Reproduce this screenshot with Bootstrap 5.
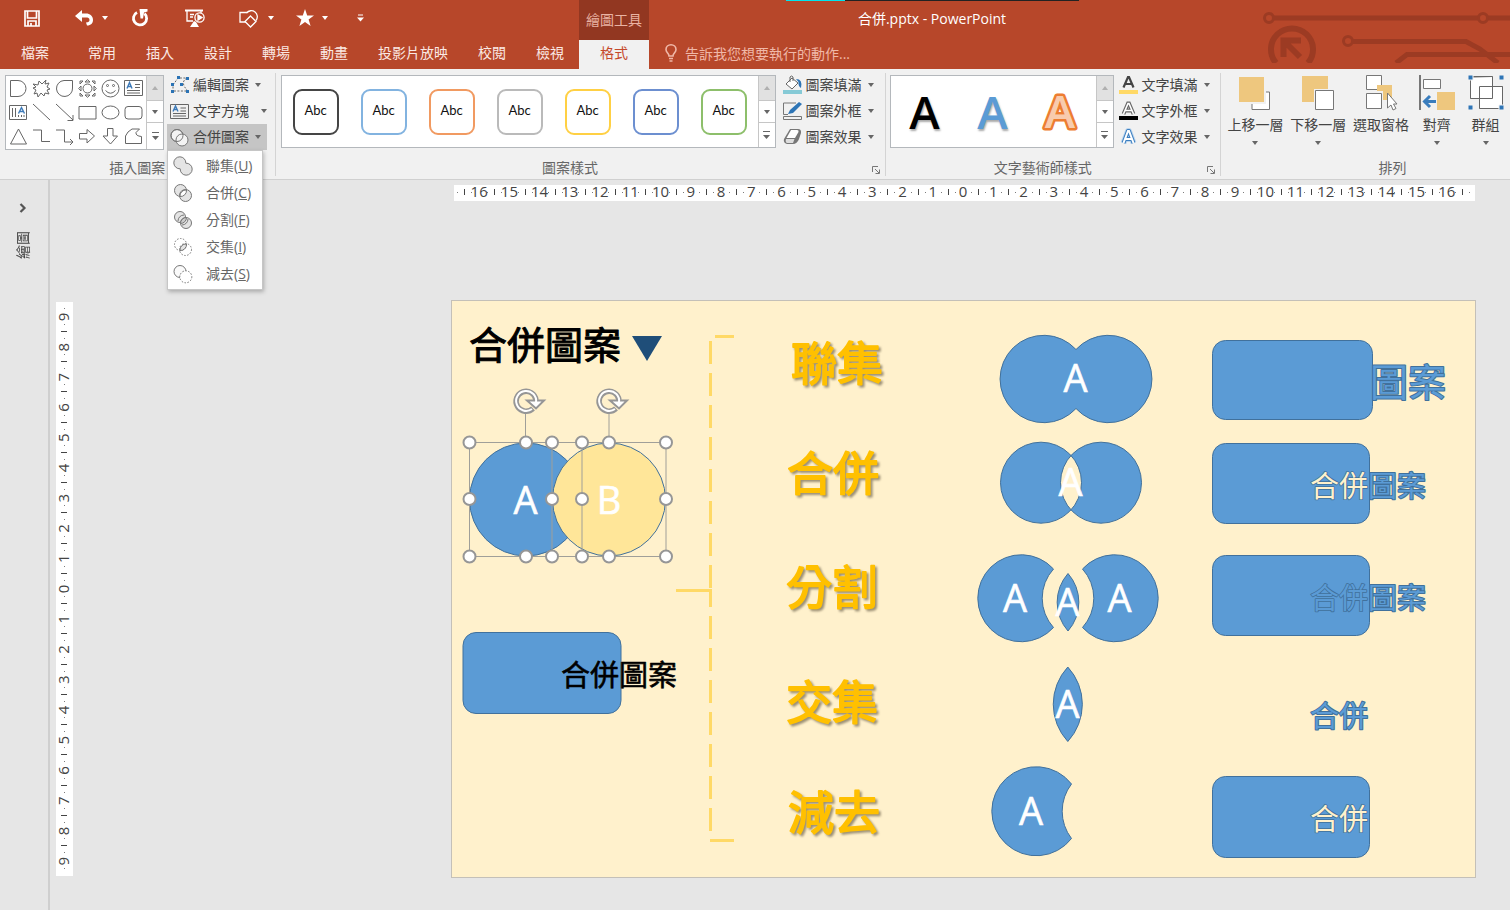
<!DOCTYPE html>
<html lang="zh-Hant">
<head>
<meta charset="utf-8">
<meta name="viewport" content="width=device-width, initial-scale=1">
<title>合併.pptx - PowerPoint</title>
<link rel="stylesheet" href="https://cdn.jsdelivr.net/npm/bootstrap@5.3.0/dist/css/bootstrap.min.css">
<style>
:root{--brand:#b7472a;--brand-dark:#923721;--ribbon:#f1f1f1;--ink:#444;--line:#d4d4d4}
body{font-family:"Open Sans","Noto Sans CJK TC",sans-serif;font-size:14px;line-height:20px;color:var(--ink);background:#e6e6e6}
button{border:0;background:none;padding:0;color:inherit;font:inherit}
svg{display:block;flex:none}
.titlebar{background:var(--brand);color:#fff}
.title-row{height:40px}
.tab-row{height:29px}
.quick{width:579px;height:36px}
.quick button{height:24px}
.context-cap{width:70px;background:var(--brand-dark);color:#e9b3a3}
.doc-title{margin-right:295px;height:38px;font-size:14px}
.tabs a{color:#fbe9e4;text-decoration:none;padding:3px 15px 0;height:29px}
.tabs .file-tab{width:70px;margin-right:3px;padding:3px 0 0;text-align:center}
.tabs .tab-on{background:var(--ribbon);color:#c5492b;width:70px;padding:3px 0 0;text-align:center}
.tell{margin-left:16px;height:26px}
.tell input{background:none;border:0;outline:0;color:#f0b8a8;width:260px;height:24px;padding:0}
.tell input::placeholder{color:#f0b8a8;opacity:1}
.circuit{top:0;right:0}
.screen-strip{top:0;left:786px;width:293px;height:1px;background:linear-gradient(90deg,#00e5ef 59px,#222 59px)}
.ribbon{background:var(--ribbon);border-bottom:1px solid #d0d0d0;height:111px}
.rgroup{margin:4px 0 3px;padding-top:2px;border-right:1px solid var(--line)}
.rgroup:last-child{border-right:0}
.rlabel{line-height:16px;color:#666}
.rlabel.with-launch{padding-right:20px}
.launch{right:5px;bottom:2px}
.gallery{border:1px solid #b4b8bc;background:#fff}
.scroller{width:17px;border-left:1px solid #c6c6c6}
.scroller button{border-bottom:1px solid #c6c6c6;height:22px;display:flex;align-items:center;justify-content:center}
.scroller button:first-child{height:25px;background:#e1e1e1}
.scroller button:last-child{border-bottom:0;flex:1}
.shape-grid{display:grid;grid-template-columns:repeat(6,23px);grid-auto-rows:24px;width:141px;padding:0 0 0 1px}
.shape-grid button{display:flex;align-items:center;justify-content:center}
.shape-grid svg{fill:none;stroke:#666;stroke-width:1}
.cmd{height:26px;gap:3px;padding-left:3px;white-space:nowrap}
.cmd .caret{margin-left:3px}
.cmd-wide .caret{margin-left:9px}
.cmd.pressed{background:#c5c5c5;width:100px}
.caret{width:0;height:0;border:3px solid transparent;border-top:4px solid #666;border-bottom:0;display:inline-block;flex:none}
.caret-w{border-top-color:#fff}
.merge-menu{min-width:96px;width:96px;top:26px;left:0;border:1px solid #c6c6c6;border-radius:0;padding:1px 0 2px;box-shadow:1px 2px 4px rgba(0,0,0,.25);font-size:14px;z-index:10}
.merge-menu .dropdown-item{height:27px;padding:0 0 0 5px;display:flex;align-items:center;gap:13px;color:#666}
.merge-menu svg{fill:#e4e4e4;stroke:#777}
.style-tile{width:68px}
.style-tile span{width:46px;height:46px;border:2px solid;border-radius:9px;display:flex;align-items:center;justify-content:center;font:13px/16px Lato,"Open Sans",sans-serif;padding-bottom:4px}
.style-tile b{font-weight:400;color:#111}
.art-tile{width:68px;font-size:46px;line-height:68px;font-weight:600;padding-bottom:2px}
.arrange button{width:63px;height:76px}
.arrange .slim{width:49px}
.arrange svg{margin:0 auto}
.arrange .tag-line{line-height:20px;margin-top:4px;white-space:nowrap}
.arrange .caret{margin-top:6px}
.arrange-label{padding-left:54px}
.side-pane{width:50px;border-right:2px solid #cfcfcf;flex:none}
.side-pane button{margin-left:16px}
.side-text{writing-mode:vertical-rl;text-orientation:sideways;transform:rotate(180deg);line-height:14px;margin-top:18px}
.v-ruler{margin:122px 0 0 6px;background:#fff;width:17px;height:574px;flex:none}
.stage{margin:5px 34px 32px 378px;min-width:0}
.h-ruler{background:#fff;margin:0 1px 99px 3px}
.h-ruler svg,.slide svg{width:100%;height:auto}
.ruler-marks{font-size:15px;fill:#444;overflow:visible}
.slide{background:#fff1cc;border:1px solid #c4c0b8}
.fill-blue{fill:#5b9bd5;stroke:#41719c}
.letter{font-size:38px;fill:#fff;stroke:#fff;stroke-width:.6;text-anchor:middle}
.hand{font-family:"Noto Sans CJK TC",sans-serif;stroke-linejoin:round;stroke-linecap:round}
.big{font-size:38px}
.mid{font-size:29px}
.black-ink{fill:#000;stroke:#000;stroke-width:1}
.mid.black-ink{stroke-width:.6}
.op-name{font-size:46px;fill:#ffc000;stroke:#ffc000;stroke-width:1.8;text-anchor:middle;filter:drop-shadow(2px 2px 1px rgba(90,80,60,.6))}
.bluetext{fill:#5b9bd5;stroke:#41719c;stroke-width:2;paint-order:stroke}
.cream{fill:#fff1cc;stroke:#41719c;stroke-width:1.6;paint-order:stroke}
.etched{fill:#5b9bd5;stroke:#41719c;stroke-width:1.6;paint-order:stroke}
</style>
</head>
<body class="d-flex flex-column min-vh-100">

<header class="titlebar position-relative">
  <svg class="circuit position-absolute" width="250" height="63" viewBox="1260 0 250 63" fill="none" stroke="#9c3b23" stroke-width="5" aria-hidden="true">
    <circle cx="1269" cy="18" r="4.500" stroke-width="3"/><path d="M1274 18H1478M1488 18H1510"/><circle cx="1483" cy="18" r="4.500" stroke-width="3"/>
    <circle cx="1348" cy="41" r="4.500" stroke-width="3"/><path d="M1353 41.500H1466L1480 49 1498 63M1396 63L1407 54.500H1510"/>
    <path d="M1276 63A21 21 0 1 1 1308 63" stroke-width="6"/><path d="M1283.500 57V40.500H1301M1284 41L1300 57" stroke-width="6"/>
  </svg>
  <div class="screen-strip position-absolute"></div>
  <div class="title-row d-flex">
    <div class="quick d-flex align-items-center">
      <button aria-label="儲存" style="margin-left:24px"><svg width="16" height="17" viewBox="0 0 16 17"><path d="M1 1H15V16H1ZM3.500 1V8H12.500V1M4 16V11H12V16M7 16V13" fill="none" stroke="#fff" stroke-width="1.700"/></svg></button>
      <button class="d-flex align-items-center" aria-label="復原" style="margin-left:35px"><svg width="19" height="16" viewBox="0 0 19 16"><path d="M0 6L7 0V3.500H11C15 3.500 18 6 18 10 18 13 16 15.500 12 15.500L11 12.500C13.500 12.500 14.500 11.500 14.500 10 14.500 8 13 7.500 11 7.500H7V12Z" fill="#fff"/></svg><i class="caret caret-w ms-2 me-1"></i></button>
      <button aria-label="重複" style="margin-left:19px"><svg width="18" height="18" viewBox="0 0 18 18"><path d="M6 3.500A6.600 6.600 0 1 0 13.500 4.500" fill="none" stroke="#fff" stroke-width="2.800"/><path d="M8.500 0H16.500V2.500L13 3.500 12 9.500H9.500Z" fill="#fff"/></svg></button>
      <button aria-label="從首張投影片" style="margin-left:36px"><svg width="20" height="19" viewBox="0 0 20 19" fill="none" stroke="#fff" stroke-width="1.300"><path d="M0 1.500H18" stroke-width="2"/><path d="M2 2V12H8M5 5.500H9M5 8H8M16 2V4"/><circle cx="14.500" cy="8.500" r="4.600"/><path d="M13 6L17 8.500 13 11Z" fill="#fff"/><path d="M9 12L5 18H14L11 13Z" fill="#fff" stroke="none"/></svg></button>
      <button class="d-flex align-items-center" aria-label="圖案" style="margin-left:34px"><svg width="21" height="20" viewBox="0 0 21 20" fill="none" stroke="#fff" stroke-width="1.300"><path d="M7 14H1V4.500H8"/><path d="M7.500 5A6 6 0 1 1 17 12.500"/><path d="M11.500 8L17 13.500 11.500 19 6 13.500Z"/></svg><i class="caret caret-w ms-2"></i></button>
      <button class="d-flex align-items-center" aria-label="最愛" style="margin-left:22px"><svg width="18" height="18" viewBox="0 0 18 18"><path d="M9 0L11.200 6.400H18L12.600 10.400 14.600 17 9 13 3.400 17 5.400 10.400 0 6.400H6.800Z" fill="#fff"/></svg><i class="caret caret-w ms-2"></i></button>
      <button aria-label="自訂快速存取工具列" style="margin-left:29px"><svg width="7" height="8" viewBox="0 0 7 8"><path d="M1 1H6" stroke="#fff"/><path d="M0 3.500H7L3.500 7.500Z" fill="#fff"/></svg></button>
    </div>
    <div class="context-cap d-flex align-items-center justify-content-center">繪圖工具</div>
    <div class="doc-title flex-grow-1 d-flex align-items-center justify-content-center">合併.pptx - PowerPoint</div>
  </div>
  <div class="tab-row d-flex">
    <nav class="tabs d-flex" aria-label="功能區">
      <a href="#" class="file-tab">檔案</a><a href="#">常用</a><a href="#">插入</a><a href="#">設計</a><a href="#">轉場</a><a href="#">動畫</a><a href="#">投影片放映</a><a href="#">校閱</a><a href="#">檢視</a><a href="#" class="tab-on">格式</a>
    </nav>
    <label class="tell d-flex align-items-center gap-2"><svg width="12" height="18" viewBox="0 0 12 18" fill="none" stroke="#f0b8a8" stroke-width="1.600"><path d="M4 12C4 9.500 1 8.500 1 5.500A5 4.700 0 0 1 11 5.500C11 8.500 8 9.500 8 12ZM4 14.500H8M4.500 17H7.500"/></svg><input type="text" aria-label="告訴我" placeholder="告訴我您想要執行的動作..."></label>
  </div>
</header>

<section class="ribbon d-flex" aria-label="格式">
  <div class="rgroup d-flex flex-column" style="width:276px">
    <div class="d-flex">
      <div class="gallery d-flex" style="margin-left:5px;width:159px;height:75px">
        <div class="shape-grid">
          <button aria-label="延遲"><svg width="19" height="19"><path d="M1.500 1.500H9A8 8 0 0 1 9 17.500H1.500Z"/></svg></button>
          <button aria-label="爆炸"><svg width="19" height="19"><path d="M1 5L6 6 7 2 10 5 14 1 13 5 17 4 15 8 18 10 15 11 17 15 13 14 12 17 9 14 6 18 5 14 2 15 4 11 1 9 4 8Z"/></svg></button>
          <button aria-label="淚滴"><svg width="19" height="19"><path d="M17.500 1.500V9A8 8 0 1 1 9 1.500Z"/></svg></button>
          <button aria-label="太陽"><svg width="19" height="19"><circle cx="9.500" cy="9.500" r="4.500"/><path d="M7 3L9.500 .7 12 3ZM7 16L9.500 18.300 12 16ZM3 7L.7 9.500 3 12ZM16 7L18.300 9.500 16 12ZM2 2H5L2 5ZM17 2V5L14 2ZM2 17V14L5 17ZM17 17H14L17 14Z"/></svg></button>
          <button aria-label="笑臉"><svg width="19" height="19"><circle cx="9.500" cy="9.500" r="8.500"/><circle cx="6.500" cy="6.500" r="1"/><circle cx="12.500" cy="6.500" r="1"/><path d="M4.500 11.500Q9.500 17 14.500 11.500"/></svg></button>
          <button aria-label="文字方塊"><svg width="19" height="19"><path d="M.5 1.500H18.500V16.500H.5ZM11 5.500H16M11 8.500H16M3 11.500H16M3 14H16"/><path d="M3 9.500L5.500 3.500 8 9.500M4 7.500H7" stroke="#3d7ab8" stroke-width="1.400"/></svg></button>
          <button aria-label="垂直文字方塊"><svg width="19" height="19"><path d="M.5 2.500H17.500V16.500H.5ZM3.500 5V14M6.500 5V14M9.500 12V14M12.500 12V14M15 12V14"/><path d="M9.500 10.500L12.500 4.500 15.500 10.500M10.500 8.500H14.500" stroke="#3d7ab8" stroke-width="1.400"/></svg></button>
          <button aria-label="線條"><svg width="19" height="19"><path d="M1 1L18 17"/></svg></button>
          <button aria-label="箭號"><svg width="19" height="19"><path d="M1 1L18 17M18 12V17.500H12.500"/></svg></button>
          <button aria-label="矩形"><svg width="19" height="19"><path d="M1 3.500H18V16H1Z"/></svg></button>
          <button aria-label="橢圓"><svg width="19" height="19"><ellipse cx="9.500" cy="9.500" rx="8.500" ry="6.500"/></svg></button>
          <button aria-label="圓角矩形"><svg width="19" height="19"><rect x="1" y="3.500" width="17" height="12.500" rx="3"/></svg></button>
          <button aria-label="三角形"><svg width="19" height="19"><path d="M9.500 2L17.500 17H1.500Z"/></svg></button>
          <button aria-label="肘形接點"><svg width="19" height="19"><path d="M1 3H9.500V14.500H18"/></svg></button>
          <button aria-label="肘形箭號"><svg width="19" height="19"><path d="M1 3H9.500V15H18M15 12L18 15 15 18"/></svg></button>
          <button aria-label="向右箭號"><svg width="19" height="19"><path d="M1.500 6.500H9V2.500L16.500 9 9 16V12H1.500Z"/></svg></button>
          <button aria-label="向下箭號"><svg width="19" height="19"><path d="M6.500 1.500H12V9H16.500L9.500 17 2 9H6.500Z"/></svg></button>
          <button aria-label="手繪多邊形"><svg width="19" height="19"><path d="M4 5L8 2H15.500L12 5.500Q11.500 9 17.500 9.500V16.500H1.500V9Z"/></svg></button>
        </div>
        <div class="scroller d-flex flex-column"><button aria-label="上"><i class="caret" style="transform:rotate(180deg);opacity:.4"></i></button><button aria-label="下"><i class="caret"></i></button><button aria-label="更多"><svg width="7" height="8"><path d="M0 .5H7" stroke="#666"/><path d="M0 4H7L3.500 8Z" fill="#666"/></svg></button></div>
      </div>
      <div class="d-flex flex-column align-items-start" style="margin:-3px 0 0 3px">
        <button class="cmd d-flex align-items-center"><svg width="20" height="18" viewBox="0 0 20 18"><path d="M3 16V9L8 2H17C12 5 12 9 18 15H3" fill="none" stroke="#666" stroke-dasharray="2 1.500"/><path d="M7 0H10V3H7ZM16 1H19V4H16ZM1 7H4V10H1ZM10 7H13V10H10ZM1 14H4V17H1ZM16 14H19V17H16Z" fill="#2b73b5"/></svg>編輯圖案<i class="caret"></i></button>
        <button class="cmd cmd-wide d-flex align-items-center"><svg width="20" height="17" viewBox="0 0 20 17"><path d="M.5 1.500H18.500V15.500H.5ZM10.500 5H16M10.500 8H16M3 10.500H16M3 13H16" fill="none" stroke="#666"/><path d="M3 8.500L5.500 3 8 8.500M4 6.500H7" fill="none" stroke="#3d7ab8" stroke-width="1.400"/></svg>文字方塊<i class="caret"></i></button>
        <div class="dropdown">
          <button class="cmd pressed d-flex align-items-center" aria-expanded="true"><svg width="20" height="19" viewBox="0 0 20 19" fill="#f3f3f3" stroke="#777"><circle cx="7" cy="7.500" r="6"/><circle cx="12" cy="12" r="6"/><circle cx="7" cy="7.500" r="6" fill="none"/></svg>合併圖案<i class="caret"></i></button>
          <div class="dropdown-menu merge-menu show position-absolute">
            <a class="dropdown-item" href="#"><svg width="20" height="20"><path d="M12.800 7.200A6 6 0 1 0 7.200 12.800A6 6 0 1 0 12.800 7.200Z"/></svg><span>聯集(<u>U</u>)</span></a>
            <a class="dropdown-item" href="#"><svg width="20" height="20"><circle cx="7.500" cy="7.500" r="6"/><circle cx="12.500" cy="12.500" r="6"/><path d="M13.500 7A6 6 0 0 1 7 13.500A6 6 0 0 1 13.500 7Z" fill="#fff"/></svg><span>合併(<u>C</u>)</span></a>
            <a class="dropdown-item" href="#"><svg width="20" height="20"><circle cx="7" cy="7" r="5.500"/><circle cx="13" cy="13" r="5.500"/><path d="M13.500 7.500A6 6 0 0 1 7.500 13.500A6 6 0 0 1 13.500 7.500Z" fill="#ccc"/><path d="M5 11A6 6 0 0 1 11 5M9 15A6 6 0 0 0 15 9" fill="none"/></svg><span>分割(<u>F</u>)</span></a>
            <a class="dropdown-item" href="#"><svg width="20" height="20"><circle cx="7.500" cy="7.500" r="6" fill="none" stroke-dasharray="1.500 1.500"/><circle cx="12.500" cy="12.500" r="6" fill="none" stroke-dasharray="1.500 1.500"/><path d="M13.500 7A6 6 0 0 1 7 13.500A6 6 0 0 1 13.500 7Z"/></svg><span>交集(<u>I</u>)</span></a>
            <a class="dropdown-item" href="#"><svg width="20" height="20"><path d="M13 7.500A6 6 0 1 0 7 13.500A6 6 0 0 1 13 7.500Z" fill="#fafafa"/><circle cx="12.800" cy="12.800" r="6" fill="#fff" stroke-dasharray="1.500 1.500"/></svg><span>減去(<u>S</u>)</span></a>
          </div>
        </div>
      </div>
    </div>
    <div class="rlabel mt-auto text-center">插入圖案</div>
  </div>

  <div class="rgroup d-flex flex-column flex-grow-1 position-relative">
    <div class="d-flex">
      <div class="gallery d-flex flex-grow-1" style="margin-left:5px;height:73px">
        <div class="d-flex flex-grow-1">
          <button class="style-tile d-flex align-items-center justify-content-center"><span style="border-color:#454545"><b>Abc</b></span></button>
          <button class="style-tile d-flex align-items-center justify-content-center"><span style="border-color:#82b3e0"><b>Abc</b></span></button>
          <button class="style-tile d-flex align-items-center justify-content-center"><span style="border-color:#f19a61"><b>Abc</b></span></button>
          <button class="style-tile d-flex align-items-center justify-content-center"><span style="border-color:#bababa"><b>Abc</b></span></button>
          <button class="style-tile d-flex align-items-center justify-content-center"><span style="border-color:#ffd044"><b>Abc</b></span></button>
          <button class="style-tile d-flex align-items-center justify-content-center"><span style="border-color:#6c8fd0"><b>Abc</b></span></button>
          <button class="style-tile d-flex align-items-center justify-content-center"><span style="border-color:#8dbf6b"><b>Abc</b></span></button>
        </div>
        <div class="scroller d-flex flex-column"><button aria-label="上"><i class="caret" style="transform:rotate(180deg);opacity:.4"></i></button><button aria-label="下"><i class="caret"></i></button><button aria-label="更多"><svg width="7" height="8"><path d="M0 .5H7" stroke="#666"/><path d="M0 4H7L3.500 8Z" fill="#666"/></svg></button></div>
      </div>
      <div class="d-flex flex-column" style="margin:-3px 11px 0 4px">
        <button class="cmd d-flex align-items-center"><svg width="20" height="20" viewBox="0 0 20 20"><path d="M3 9L9 3 15 8 9 14Z" fill="#fff" stroke="#666"/><path d="M7 7V2Q8.500 0 10 2V6" fill="none" stroke="#666"/><path d="M13 4Q20 4 18 13Q15 11 15.500 7Z" fill="#2e75b6"/><path d="M0 15H19V19H0Z" fill="#86cad6"/></svg>圖案填滿<i class="caret"></i></button>
        <button class="cmd d-flex align-items-center"><svg width="20" height="20" viewBox="0 0 20 20"><path d="M13 2H.5V13.500H5M.5 15.500H18.500V18.500H.5Z" fill="none" stroke="#777"/><path d="M5 13L7 9 16 1 19 3 10 12Z" fill="#2e75b6"/></svg>圖案外框<i class="caret"></i></button>
        <button class="cmd d-flex align-items-center"><svg width="20" height="20" viewBox="0 0 20 20"><path d="M7 2H15Q18.500 2 18 6L16 12Q14 17 10 17H4Q0 16 1 12Z" fill="#777"/><path d="M8 3H14Q16 3 15.500 5L12 11H3.500Z" fill="#fff"/><path d="M3 12H11.500L10 16H4Q2 15 3 12Z" fill="#ddd"/></svg>圖案效果<i class="caret"></i></button>
      </div>
    </div>
    <div class="rlabel with-launch mt-auto text-center">圖案樣式</div>
    <button class="launch position-absolute" aria-label="設定圖案格式"><svg width="8" height="8" fill="none" stroke="#777"><path d="M.5 6V.5H6M3 3L7 7M7.500 3.500V7.500H3.500"/></svg></button>
  </div>

  <div class="rgroup d-flex flex-column position-relative" style="width:336px">
    <div class="d-flex">
      <div class="gallery d-flex" style="margin-left:4px;width:224px;height:73px">
        <div class="d-flex flex-grow-1">
          <button class="art-tile" style="color:#000;text-shadow:1px 2px 2px #aaa">A</button>
          <button class="art-tile" style="color:#5b9bd5;text-shadow:1px 2px 2px #aaa">A</button>
          <button class="art-tile" aria-label="A"><svg width="68" height="68"><text x="33" y="51" text-anchor="middle" fill="#f8cbad" stroke="#ed7d31" stroke-width="5" paint-order="stroke" stroke-linejoin="round">A</text></svg></button>
        </div>
        <div class="scroller d-flex flex-column"><button aria-label="上"><i class="caret" style="transform:rotate(180deg);opacity:.4"></i></button><button aria-label="下"><i class="caret"></i></button><button aria-label="更多"><svg width="7" height="8"><path d="M0 .5H7" stroke="#666"/><path d="M0 4H7L3.500 8Z" fill="#666"/></svg></button></div>
      </div>
      <div class="d-flex flex-column" style="margin:-3px 0 0 2px">
        <button class="cmd d-flex align-items-center"><svg width="20" height="20" viewBox="0 0 20 20"><path d="M4.500 12.500L9 2H10L14.500 12.500M6 9H13" fill="none" stroke="#444" stroke-width="2.200"/><path d="M0 15H19V19H0Z" fill="#ffd966"/></svg>文字填滿<i class="caret"></i></button>
        <button class="cmd d-flex align-items-center"><svg width="20" height="20" viewBox="0 0 20 20"><path d="M4.500 13L9 2.500H10L14.500 13M6 9.500H13" fill="none" stroke="#666" stroke-width="3.800"/><path d="M4.500 13L9 2.500H10L14.500 13M6 9.500H13" fill="none" stroke="#fff" stroke-width="1.600"/><path d="M0 15H19V19H0Z" fill="#000"/></svg>文字外框<i class="caret"></i></button>
        <button class="cmd d-flex align-items-center"><svg width="20" height="20" viewBox="0 0 20 20"><path d="M4.500 16L9 4H10L14.500 16M6 12H13" fill="none" stroke="#bcd6ee" stroke-width="6" stroke-linejoin="round"/><path d="M4.500 16L9 4H10L14.500 16M6 12H13" fill="none" stroke="#3d7fc0" stroke-width="4" stroke-linejoin="round"/><path d="M4.500 16L9 4H10L14.500 16M6 12H13" fill="none" stroke="#fff" stroke-width="2"/></svg>文字效果<i class="caret"></i></button>
      </div>
    </div>
    <div class="rlabel with-launch mt-auto text-center">文字藝術師樣式</div>
    <button class="launch position-absolute" aria-label="設定文字效果格式"><svg width="8" height="8" fill="none" stroke="#777"><path d="M.5 6V.5H6M3 3L7 7M7.500 3.500V7.500H3.500"/></svg></button>
  </div>

  <div class="rgroup d-flex flex-column" style="width:289px">
    <div class="arrange d-flex" style="margin-left:3px">
      <button class="d-flex flex-column align-items-center"><svg width="34" height="36"><path d="M14 17H31.500V34.500H14Z" fill="#fff" stroke="#777"/><path d="M0 1H27V28H0Z" fill="#eec77e" stroke="#f1f1f1" stroke-width="2"/></svg><span class="tag-line">上移一層</span><i class="caret"></i></button>
      <button class="d-flex flex-column align-items-center"><svg width="34" height="36"><path d="M1 1H27V27H1Z" fill="#eec77e"/><path d="M13 14H34V36H13Z" fill="#f1f1f1"/><path d="M14.500 15.500H32.500V34.500H14.500Z" fill="#fff" stroke="#777"/></svg><span class="tag-line">下移一層</span><i class="caret"></i></button>
      <button class="d-flex flex-column align-items-center"><svg width="34" height="36"><path d="M2.500 .5H17.500V14.500H2.500ZM2.500 18.500H17.500V33.500H2.500Z" fill="#fff" stroke="#777"/><path d="M13 10H28V25H19V16H13Z" fill="#eec77e"/><path d="M23.500 18V33L27 30 29 35 32 33.500 29.500 29H33Z" fill="#fff" stroke="#777"/></svg><span class="tag-line">選取窗格</span></button>
      <button class="slim d-flex flex-column align-items-center"><svg width="36" height="36"><path d="M1 0V35" stroke="#777" stroke-width="2"/><path d="M4.500 4.500H21.500V13.500H4.500Z" fill="#fff" stroke="#777"/><path d="M18 17H36V35H18Z" fill="#eec77e"/><path d="M5 26.500H17M11 21L5.500 26.500 11 32" fill="none" stroke="#3a7dbd" stroke-width="3"/></svg><span class="tag-line">對齊</span><i class="caret"></i></button>
      <button class="slim d-flex flex-column align-items-center"><svg width="36" height="36"><path d="M2.500 2.500V23.500H11.500V33.500H34.500V11.500H24.500V1.500Z" fill="#fff" stroke="#aaa"/><path d="M2.500 1.500H24.500V23.500H2.500ZM11.500 11.500H34.500V33.500H11.500Z" fill="none" stroke="#666"/><path d="M0 0H5V5H0ZM31 0H36V5H31ZM0 30H5V35H0ZM31 30H36V35H31Z" fill="#2e75b6" stroke="#f1f1f1"/></svg><span class="tag-line">群組</span><i class="caret"></i></button>
    </div>
    <div class="rlabel arrange-label mt-auto text-center">排列</div>
  </div>
</section>

<main class="d-flex flex-grow-1">
  <aside class="side-pane">
    <button class="d-flex flex-column align-items-center" style="padding-top:23px" aria-label="展開繪圖窗格"><svg width="14" height="10"><path d="M4.500 1L8.500 5 4.500 9" fill="none" stroke="#555" stroke-width="2.200"/></svg><span class="side-text">繪圖</span></button>
  </aside>
  <div class="v-ruler"><svg id="vRuler" class="ruler-marks" width="17" height="574" viewBox="0 0 17 574"></svg></div>
  <div class="stage flex-grow-1">
    <div class="h-ruler"><svg id="hRuler" class="ruler-marks" viewBox="0 0 1021 16"></svg></div>
    <div class="slide">
      <svg viewBox="452 301 1023 576" role="img" aria-label="合併圖案投影片">
        <text class="hand big black-ink" x="469" y="359">合併圖案</text>
        <path d="M632 336H662L647 361Z" fill="#1f4e79"/>
        <g stroke="#ffd966" stroke-width="3" fill="none">
          <path d="M710.500 341V589" stroke-dasharray="23 9"/><path d="M676 590.500H712M710.500 589V607"/><path d="M710.500 616V832" stroke-dasharray="23 9"/><path d="M715 336.500H734M710 840.500H734"/>
        </g>
        <circle class="fill-blue" cx="526" cy="499.500" r="56.500"/>
        <circle cx="609" cy="499.500" r="56.500" fill="#ffe699" stroke="#41719c"/>
        <text class="letter" x="525.500" y="513.500">A</text><text class="letter" x="609" y="513.500">B</text>
        <path d="M469.500 442.500H582V556.500H469.500ZM552 442.500H666V556.500H552ZM525.500 412V442M609 412V442" fill="none" stroke="#a09f99"/>
        <g id="handles" fill="#fff" stroke="#969696" stroke-width="2"></g>
        <g id="turn" fill="none">
          <path d="M533 408.500A10 10 0 1 1 536 400" stroke="#969696" stroke-width="5.500"/><path d="M527 400.500H544L536 408.500Z" fill="#fff" stroke="#969696" stroke-width="2"/><path d="M532 409A10 10 0 1 1 536 402.500" stroke="#fff" stroke-width="2"/>
        </g>
        <use href="#turn" x="83"/>
        <rect class="fill-blue" x="463" y="632.500" width="158" height="81" rx="13"/>
        <text class="hand mid black-ink" x="561" y="686">合併圖案</text>

        <g class="hand">
          <text class="op-name" x="837" y="380">聯集</text><text class="op-name" x="833" y="490">合併</text><text class="op-name" x="832" y="604">分割</text><text class="op-name" x="832" y="719">交集</text><text class="op-name" x="834" y="829">減去</text>
        </g>

        <g class="fill-blue">
          <path d="M1076 349.500A43.700 43.700 0 1 0 1076 408.500A43.700 43.700 0 1 0 1076 349.500Z"/>
          <path fill-rule="evenodd" d="M1000.500 482.700a40.500 40.500 0 1 0 81 0a40.500 40.500 0 1 0 -81 0ZM1060.500 482.700a40.500 40.500 0 1 0 81 0a40.500 40.500 0 1 0 -81 0Z"/>
          <path d="M1053.500 569A43.500 43.500 0 1 0 1053.500 627.500A43.500 43.500 0 0 1 1053.500 569Z"/>
          <path d="M1082.500 569A43.500 43.500 0 1 1 1082.500 627.500A43.500 43.500 0 0 0 1082.500 569Z"/>
          <path d="M1068 573.500A43.500 43.500 0 0 1 1068 631A43.500 43.500 0 0 1 1068 573.500Z"/>
          <path d="M1067.800 667A55 55 0 0 1 1067.800 741.500A55 55 0 0 1 1067.800 667Z"/>
          <path d="M1071.500 784A44.500 44.500 0 1 0 1071.500 838.500A44.500 44.500 0 0 1 1071.500 784Z"/>
          <rect x="1212.500" y="340.500" width="160" height="79" rx="13"/>
          <rect x="1212.500" y="443.500" width="157" height="80" rx="13"/>
          <rect x="1212.500" y="555.500" width="157" height="80" rx="13"/>
          <rect x="1212.500" y="776.500" width="157" height="81" rx="13"/>
        </g>
        <text class="letter" x="1075.500" y="392">A</text><text class="letter" x="1070.500" y="496">A</text><text class="letter" x="1015" y="612">A</text><text class="letter" x="1067.500" y="616">A</text><text class="letter" x="1119.500" y="612">A</text><text class="letter" x="1067.500" y="718">A</text><text class="letter" x="1031" y="825">A</text>

        <g class="hand">
          <text class="big bluetext" x="1370" y="396">圖案</text>
          <text class="mid" x="1310" y="497"><tspan class="cream">合併</tspan><tspan class="bluetext">圖案</tspan></text>
          <text class="mid" x="1310" y="609"><tspan class="etched">合併</tspan><tspan class="bluetext">圖案</tspan></text>
          <text class="mid bluetext" x="1310" y="727">合併</text>
          <text class="mid cream" x="1310" y="830">合併</text>
        </g>
      </svg>
    </div>
  </div>
</main>

<script>
const NS = 'http://www.w3.org/2000/svg';
function add(parent, tag, attrs, text) {
  const el = document.createElementNS(NS, tag);
  for (const k in attrs) el.setAttribute(k, attrs[k]);
  if (text !== undefined) el.textContent = text;
  parent.appendChild(el);
}
// One number per centimetre, a tick at each half and a dot at each quarter
const step = 30.24;
function ruler(host, count, origin, length, vertical) {
  const g = document.createElementNS(NS, 'g');
  if (vertical) g.setAttribute('transform', 'translate(0 ' + length + ') rotate(-90)');
  host.appendChild(g);
  const base = vertical ? 13 : 12;
  for (let i = -count - 1; i <= count; i++) {
    const x = origin + i * step;
    if (i >= -count) add(g, 'text', {x: x, y: base, 'text-anchor': 'middle'}, Math.abs(i));
    const t = x + step / 2;
    if (t > 0 && t < length) add(g, 'rect', {x: Math.round(t), y: base - 8, width: 1, height: 6});
    [t - 7, t + 7].forEach(d => { if (d > 0 && d < length) add(g, 'rect', {x: Math.round(d), y: base - 5, width: 1, height: 1, opacity: .7}); });
  }
}
ruler(document.getElementById('hRuler'), 16, 509, 1021, false);
ruler(document.getElementById('vRuler'), 9, 287, 574, true);
const handles = document.getElementById('handles');
[469.5, 526, 552, 582, 609, 666].forEach(x => [442.5, 499, 556.5].forEach(y => {
  if (y !== 499 || (x !== 526 && x !== 609)) add(handles, 'circle', {cx: x, cy: y, r: 6});
}));
</script>
<script src="https://cdn.jsdelivr.net/npm/bootstrap@5.3.0/dist/js/bootstrap.bundle.min.js"></script>
</body>
</html>
